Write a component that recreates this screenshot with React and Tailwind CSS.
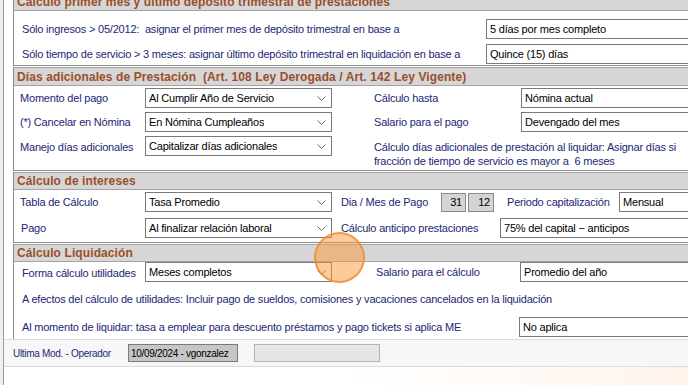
import React from 'react';

const Chevron = () => (
  <svg width="9" height="5" viewBox="0 0 9 5" className="shrink-0">
    <path d="M0.5 0.5 L4.5 4.5 L8.5 0.5" fill="none" stroke="#6b6b6b" strokeWidth="1" />
  </svg>
);

const Header = ({ children, h = 'h-[19px]' }) => (
  <div className={`${h} flex items-center border-y border-[#a3a3a3] bg-[#d6d6d6] pl-[3px] text-[12px] font-bold tracking-[0.1px] text-[#9a4f2c] whitespace-nowrap`}>
    {children}
  </div>
);

const Select = ({ value, className = '' }) => (
  <div className={`flex h-[20px] w-[187px] shrink-0 items-center justify-between border border-[#7a7a7a] bg-white pl-[3px] pr-[5px] text-black ${className}`}>
    <span className="truncate">{value}</span>
    <Chevron />
  </div>
);

const Input = ({ value, className = '' }) => (
  <div className={`flex h-[20px] shrink-0 items-center border border-[#7a7a7a] bg-white pl-[3px] text-black whitespace-nowrap ${className}`}>
    {value}
  </div>
);

const Label = ({ children, className = '' }) => (
  <span className={`shrink-0 whitespace-nowrap text-[#1c2773] ${className}`}>{children}</span>
);

export default function App() {
  return (
    <div className="relative h-[385px] w-[688px] overflow-hidden bg-[#f0f0f0] pl-[3px] text-[11px] tracking-[-0.2px] font-['Liberation_Sans',Arial,sans-serif]">
      <div className="flex h-full flex-col border-l border-[#9a9a9a] bg-white">
        <div className="h-[339px] overflow-hidden pl-[9px]">
          <div className="mt-[-8px] w-[720px]">
            {/* Group 1 */}
            <div className="border-b border-l border-[#8a8a8a]">
              <Header>Calculo primer mes y último depósito trimestral de prestaciones</Header>
              <div className="flex flex-col gap-[5px] pb-[1px] pl-[8px] pt-[8px]">
                <div className="flex items-center">
                  <Label className="w-[464px]">Sólo ingresos &gt; 05/2012:&nbsp; asignar el primer mes de depósito trimestral en base a</Label>
                  <Input value="5 días por mes completo" className="w-[230px]" />
                </div>
                <div className="flex items-center">
                  <Label className="w-[464px]">Sólo tiempo de servicio &gt; 3 meses: asignar último depósito trimestral en liquidación en base a</Label>
                  <Input value="Quince (15) días" className="h-[19px] w-[230px]" />
                </div>
              </div>
            </div>

            {/* Group 2 */}
            <div className="mt-[1px] border-b border-l border-[#8a8a8a]">
              <Header>Días adicionales de Prestación&nbsp; (Art. 108 Ley Derogada / Art. 142 Ley Vigente)</Header>
              <div className="flex flex-col gap-[4px] pb-[14px] pl-[6px] pt-[2px]">
                <div className="flex items-center">
                  <Label className="w-[125px]">Momento del pago</Label>
                  <Select value="Al Cumplir Año de Servicio" />
                  <Label className="ml-[42px] w-[147px]">Cálculo hasta</Label>
                  <Input value="Nómina actual" className="w-[200px]" />
                </div>
                <div className="flex items-center">
                  <Label className="w-[125px]">(*) Cancelar en Nómina</Label>
                  <Select value="En Nómina Cumpleaños" className="h-[19px]" />
                  <Label className="ml-[42px] w-[147px]">Salario para el pago</Label>
                  <Input value="Devengado del mes" className="h-[19px] w-[200px]" />
                </div>
                <div className="flex h-[20px] items-start">
                  <Label className="mt-[3px] w-[125px]">Manejo días adicionales</Label>
                  <Select value="Capitalizar días adicionales" />
                  <div className="ml-[42px] mt-[4px] leading-[14px] text-[#1c2773]">
                    <div>Cálculo días adicionales de prestación al liquidar: Asignar días si</div>
                    <div>fracción de tiempo de servicio es mayor a&nbsp; 6 meses</div>
                  </div>
                </div>
              </div>
            </div>

            {/* Group 3 */}
            <div className="mt-[1px] border-b border-l border-[#8a8a8a]">
              <Header h="h-[18px]">Cálculo de intereses</Header>
              <div className="flex flex-col gap-[6px] pb-[4px] pl-[6px] pt-[2px]">
                <div className="flex items-center">
                  <Label className="w-[125px]">Tabla de Cálculo</Label>
                  <Select value="Tasa Promedio" />
                  <Label className="ml-[9px] w-[100px]">Dia / Mes de Pago</Label>
                  <div className="flex h-[19px] w-[25px] shrink-0 items-center justify-end border border-[#8a8a8a] bg-[#d4d4d4] pr-[3px] text-black">31</div>
                  <div className="ml-[2px] flex h-[19px] w-[26px] shrink-0 items-center justify-end border border-[#8a8a8a] bg-[#d4d4d4] pr-[3px] text-black">12</div>
                  <Label className="ml-[13px] w-[112px]">Periodo capitalización</Label>
                  <Input value="Mensual" className="w-[90px]" />
                </div>
                <div className="flex items-center">
                  <Label className="ml-[1px] w-[124px]">Pago</Label>
                  <Select value="Al finalizar relación laboral" />
                  <Label className="ml-[9px] w-[159px]">Cálculo anticipo prestaciones</Label>
                  <Input value="75% del capital − anticipos" className="h-[19px] w-[220px]" />
                </div>
              </div>
            </div>

            {/* Group 4 */}
            <div className="mt-[1px] border-l border-[#8a8a8a] pb-[4px]">
              <Header h="h-[18px]">Cálculo Liquidación</Header>
              <div className="flex flex-col pl-[8px]">
                <div className="flex items-center">
                  <Label className="mt-[2px] w-[123px]">Forma cálculo utilidades</Label>
                  <Select value="Meses completos" />
                  <Label className="ml-[44px] w-[144px]">Salario para el cálculo</Label>
                  <Input value="Promedio del año" className="w-[200px]" />
                </div>
                <div className="flex h-[35px] items-center">
                  <Label>A efectos del cálculo de utilidades: Incluir pago de sueldos, comisiones y vacaciones cancelados en la liquidación</Label>
                </div>
                <div className="flex items-center">
                  <Label className="w-[497px]">Al momento de liquidar: tasa a emplear para descuento préstamos y pago tickets si aplica ME</Label>
                  <Input value="No aplica" className="w-[200px]" />
                </div>
              </div>
            </div>
          </div>
        </div>

        {/* Status bar */}
        <div className="flex h-[28px] items-center border-y border-[#dcdcdc] bg-[#f7f7f7] pl-[9px] text-[10px] tracking-[-0.3px]">
          <span className="w-[115px] text-[#1c2773]">Ultima Mod. - Operador</span>
          <div className="flex h-[18px] w-[110px] items-center border border-[#7a7a7a] bg-[#c6c6c6] pl-[2px] text-black whitespace-nowrap">
            10/09/2024 - vgonzalez
          </div>
          <div className="ml-[16px] h-[18px] w-[126px] border border-[#b4b4b4] bg-[#e6e6e6]" />
        </div>
        <div className="flex-1 bg-gradient-to-r from-white via-white to-[#fff4ec]" />
      </div>

      {/* click indicator */}
      <div className="absolute left-[314px] top-[232px] h-[51px] w-[51px] rounded-full border-2 border-[rgba(240,135,40,0.75)] bg-[rgba(250,150,55,0.5)]" />
    </div>
  );
}
